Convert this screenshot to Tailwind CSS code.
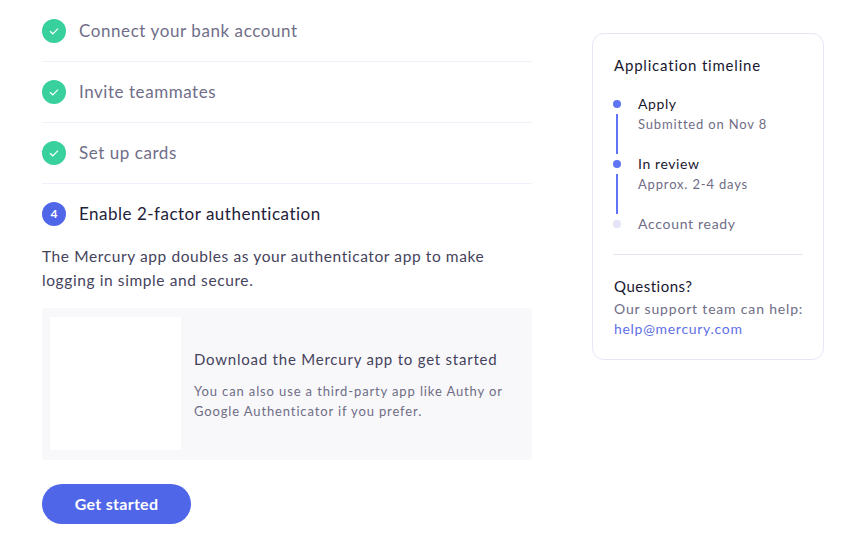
<!DOCTYPE html>
<html lang="en">
<head>
    <meta charset="UTF-8">
    <title>Application</title>
    <script src="https://cdn.jsdelivr.net/npm/@tailwindcss/browser@4"></script>
</head>
<body class="bg-white h-[538px] overflow-hidden font-['Lato',sans-serif]">
    <div class="flex items-start pl-[42px]">
        <!-- Steps -->
        <div class="w-[490px] shrink-0">
            <div class="h-[62px] flex items-center gap-[13px] border-b border-[#f0f0fa]">
                <svg class="w-6 h-6 shrink-0" viewBox="0 0 24 24"><circle cx="12" cy="12" r="12" fill="#38d09c"/><path d="M8 12.2l2.8 2.6L16 9.6" fill="none" stroke="#fff" stroke-width="1.2"/></svg>
                <span class="text-[17px] tracking-[0.58px] text-[#706e88]">Connect your bank account</span>
            </div>
            <div class="h-[61px] flex items-center gap-[13px] border-b border-[#f0f0fa]">
                <svg class="w-6 h-6 shrink-0" viewBox="0 0 24 24"><circle cx="12" cy="12" r="12" fill="#38d09c"/><path d="M8 12.2l2.8 2.6L16 9.6" fill="none" stroke="#fff" stroke-width="1.2"/></svg>
                <span class="text-[17px] tracking-[0.55px] text-[#706e88]">Invite teammates</span>
            </div>
            <div class="h-[61px] flex items-center gap-[13px] border-b border-[#f0f0fa]">
                <svg class="w-6 h-6 shrink-0" viewBox="0 0 24 24"><circle cx="12" cy="12" r="12" fill="#38d09c"/><path d="M8 12.2l2.8 2.6L16 9.6" fill="none" stroke="#fff" stroke-width="1.2"/></svg>
                <span class="text-[17px] tracking-[0.55px] text-[#706e88]">Set up cards</span>
            </div>
            <div class="h-[60px] flex items-center gap-[13px]">
                <div class="w-6 h-6 shrink-0 rounded-full bg-[#5066e8] text-white text-[12px] font-bold flex items-center justify-center">4</div>
                <span class="text-[17px] tracking-[0.5px] text-[#23213a]">Enable 2-factor authentication</span>
            </div>
            <p class="text-[15.5px] leading-[24px] tracking-[0.6px] text-[#45435c]">The Mercury app doubles as your authenticator app to make<br>logging in simple and secure.</p>
            <div class="mt-4 h-[152px] rounded bg-[#f8f8fb] flex items-center pl-2">
                <div class="w-[131px] h-[133px] mb-px bg-white shrink-0"></div>
                <div class="ml-[13px] pt-[2px]">
                    <h3 class="text-[15px] leading-[20px] tracking-[0.78px] text-[#45435c]">Download the Mercury app to get started</h3>
                    <p class="mt-3 text-[13px] leading-[20px] tracking-[0.87px] text-[#6f6d85]">You can also use a third-party app like Authy or<br>Google Authenticator if you prefer.</p>
                </div>
            </div>
            <button class="mt-6 w-[149px] h-10 rounded-full bg-[#5066e8] text-white text-[16px] font-bold tracking-[0.3px]">Get started</button>
        </div>
        <!-- Timeline card -->
        <div class="ml-[60px] mt-[33px] w-[232px] h-[327px] rounded-[12px] border border-[#e6e6f7] pl-[20px] pr-[20px] pt-[21px]">
            <h2 class="pl-px text-[15px] leading-[20px] tracking-[0.8px] text-[#1a1830]">Application timeline</h2>
            <div class="mt-[19px] flex">
                <div class="w-6 shrink-0 flex flex-col">
                    <span class="w-2 h-2 mt-[6px] rounded-full bg-[#5f75f5]"></span>
                    <span class="w-0.5 h-10 ml-[3px] mt-[6px] bg-[#5f75f5]"></span>
                    <span class="w-2 h-2 mt-[6px] rounded-full bg-[#5f75f5]"></span>
                    <span class="w-0.5 h-10 ml-[3px] mt-[6px] bg-[#5f75f5]"></span>
                    <span class="w-2 h-2 mt-[6px] rounded-full bg-[#e4e4f8]"></span>
                </div>
                <div class="pl-px">
                    <p class="text-[14px] leading-5 tracking-[0.6px] text-[#1a1830]">Apply</p>
                    <p class="text-[13px] leading-5 tracking-[0.83px] text-[#6f6d85]">Submitted on Nov 8</p>
                    <p class="mt-5 text-[14px] leading-5 tracking-[0.6px] text-[#1a1830]">In review</p>
                    <p class="text-[13px] leading-5 tracking-[0.83px] text-[#6f6d85]">Approx. 2-4 days</p>
                    <p class="mt-5 text-[14px] leading-5 tracking-[0.7px] text-[#6f6d85]">Account ready</p>
                </div>
            </div>
            <div class="mt-5 border-t border-[#e6e6f7] pt-[21px] pl-px">
                <p class="text-[15px] leading-5 tracking-[0.5px] text-[#1a1830]">Questions?</p>
                <p class="mt-[3px] text-[14px] leading-5 tracking-[0.82px] text-[#6f6d85] whitespace-nowrap">Our support team can help:</p>
                <a class="text-[14px] leading-5 tracking-[0.7px] text-[#5f6fe6] block">help@mercury.com</a>
            </div>
        </div>
    </div>
</body>
</html>
